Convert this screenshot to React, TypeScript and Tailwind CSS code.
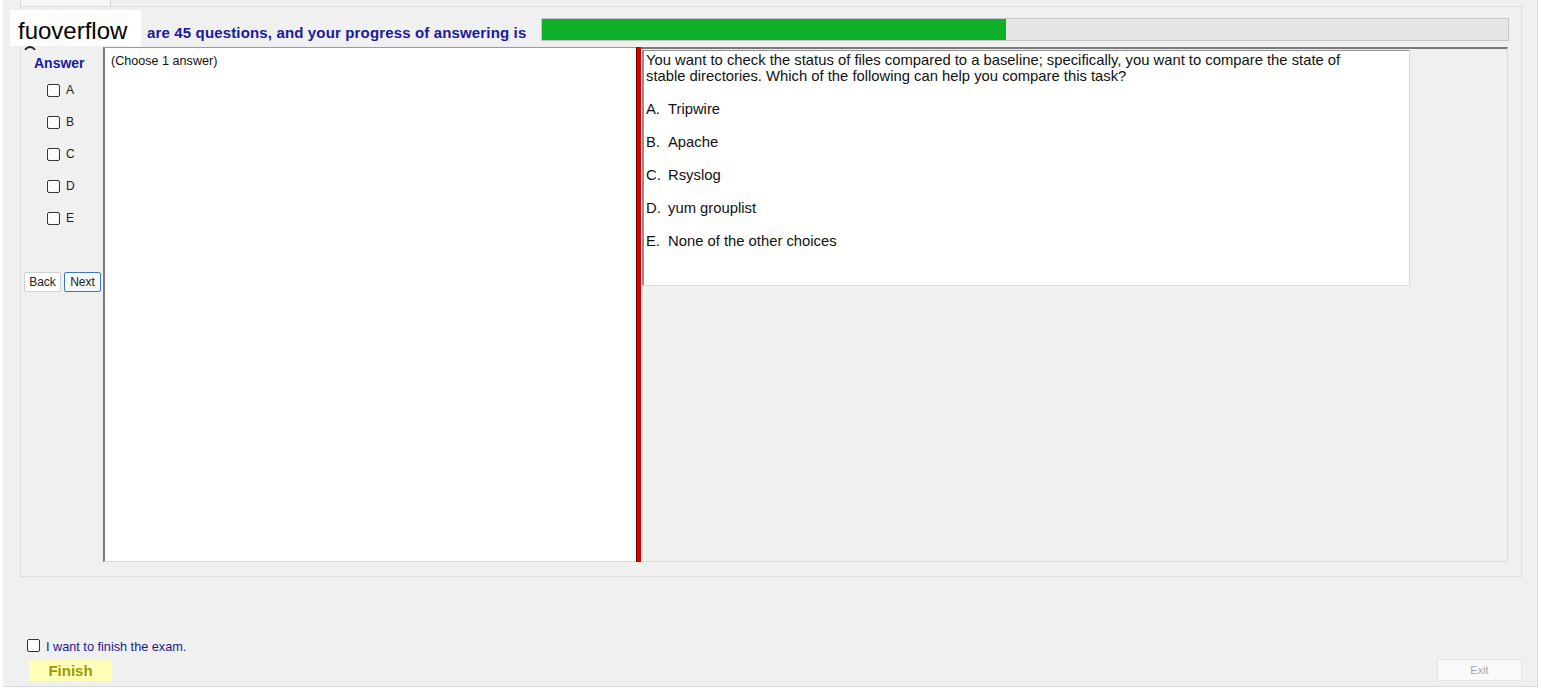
const font = { fontFamily: '"Liberation Sans", Arial, sans-serif' };

const letters = ["A", "B", "C", "D", "E"];

const choices = [
  { key: "A.", text: "Tripwire" },
  { key: "B.", text: "Apache" },
  { key: "C.", text: "Rsyslog" },
  { key: "D.", text: "yum grouplist" },
  { key: "E.", text: "None of the other choices" }
];

function Box() {
  return <span className="inline-block h-[13px] w-[13px] shrink-0 rounded-[2px] border border-[#333] bg-white" />;
}

export default function App() {
  return (
    <div className="relative h-[690px] w-[1542px] overflow-hidden bg-white" style={font}>
      <div className="ml-[3px] flex h-[687px] w-[1535px] flex-col border-r border-b border-[#dadada] bg-[#f0f0f0]">
        {/* tab strip */}
        <div className="flex h-[6px] pl-[17px]">
          <div className="w-[91px] border-x border-[#d8d8d8] bg-[#f7f7f7]" />
        </div>

        {/* main panel */}
        <div className="ml-[17px] flex h-[571px] w-[1502px] flex-col border border-[#dedede] bg-[#f0f0f0]">
          <div className="flex h-[40px] items-start">
            {/* the start of the sentence sits under the watermark */}
            <div className="w-[520px] pl-[126px] pt-[18px] text-[15px] font-bold leading-[16px] tracking-[0.15px] whitespace-nowrap text-[#1a1a9c]">
              are 45 questions, and your progress of answering is
            </div>
            <div className="mt-[11px] flex h-[23px] w-[968px] border border-[#c4c4c4] bg-[#e6e6e6]">
              <div className="h-full w-[464px] bg-[#0fb02a]" />
            </div>
          </div>

          <div className="flex h-[515px]">
            {/* answer column */}
            <div className="flex w-[82px] flex-col">
              <div className="pt-[9px] pl-[13px] text-[14px] font-bold leading-[14px] text-[#1a1a9c]">Answer</div>
              <div className="flex flex-col gap-[18px] pt-[13px] pl-[26px]">
                {letters.map((l) => (
                  <div key={l} className="flex h-[14px] items-center gap-[6px] text-[12px] text-[#222]">
                    <Box />
                    <span>{l}</span>
                  </div>
                ))}
              </div>
              <div className="mt-[47px] flex gap-[3px] pl-[3px]">
                <button type="button" className="h-[20px] w-[37px] rounded-[2px] border border-[#d0d0d0] bg-white text-[12px] text-[#222]">
                  Back
                </button>
                <button type="button" className="h-[20px] w-[37px] rounded-[2px] border border-[#3d7ab3] bg-[#f4f9fd] text-[12px] text-[#222]">
                  Next
                </button>
              </div>
            </div>

            {/* notes panel */}
            <div className="w-[533px] border-t border-l-2 border-b border-[#7a7a7a] border-b-[#d8d8d8] border-t-[#9a9a9a] bg-white pt-[6px] pl-[6px] text-[12.6px] leading-[14px] text-[#111]">
              (Choose 1 answer)
            </div>

            {/* splitter */}
            <div className="w-[5px] border-l border-[#7a0000] bg-[#d80000]" />

            {/* question area */}
            <div className="w-[867px] border-t-2 border-r border-b border-[#7a7a7a] border-r-[#dcdcdc] border-b-[#dcdcdc] pt-[1px] pl-[1px]">
              <div className="h-[236px] w-[768px] border-t border-l-2 border-r border-b border-[#909090] border-r-[#dcdcdc] border-b-[#dcdcdc] bg-white pt-[1px] pl-[2px] text-[14.8px] leading-[16px] text-[#111]">
                <p>
                  You want to check the status of files compared to a baseline; specifically, you want to compare the state of
                  <br />
                  stable directories. Which of the following can help you compare this task?
                </p>
                {choices.map((c) => (
                  <p key={c.key} className="mt-[17px] flex">
                    <span className="w-[22px]">{c.key}</span>
                    <span>{c.text}</span>
                  </p>
                ))}
              </div>
            </div>
          </div>
        </div>

        {/* footer */}
        <div className="flex flex-1 items-end justify-between pr-[15px] pb-[5px] pl-[24px]">
          <div className="flex flex-col">
            <div className="flex items-center gap-[6px] text-[12.7px] leading-[14px] text-[#1a1a8c]">
              <Box />
              <span className="pt-[3px]">I want to finish the exam.</span>
            </div>
            <button type="button" className="mt-[6px] ml-[2px] h-[21px] w-[83px] bg-[#ffffb8] text-[15px] font-bold text-[#9a9a00]">
              Finish
            </button>
          </div>
          <button type="button" className="h-[22px] w-[85px] border border-[#e4e4e4] bg-[#f9f9f9] text-[11px] text-[#a8a8a8]">
            Exit
          </button>
        </div>
      </div>

      {/* partially hidden icon + watermark */}
      <div className="absolute top-[46px] left-[24px] h-[4px] w-[12px] overflow-hidden">
        <div className="h-[12px] w-[12px] rounded-full border-2 border-[#222]" />
      </div>
      <div className="absolute top-[10px] left-[10px] h-[36px] w-[131px] bg-white pt-[9px] pl-[8px] text-[24px] leading-[24px] text-black">
        fuoverflow
      </div>
    </div>
  );
}
